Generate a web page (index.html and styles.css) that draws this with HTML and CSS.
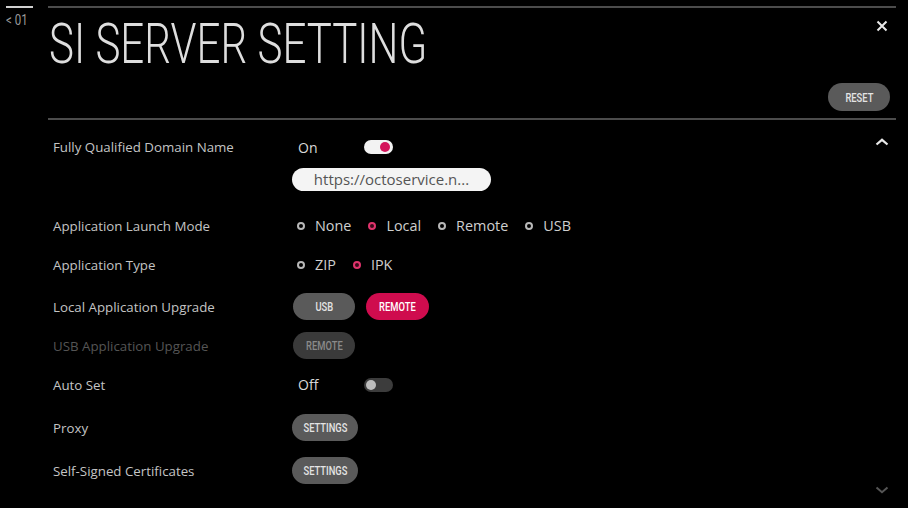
FILE: index.html
```html
<!DOCTYPE html>
<html lang="en">
<head>
  <meta charset="UTF-8">
  <title>SI Server Setting</title>
  <link rel="stylesheet" href="styles.css">
</head>
<body>
  <div class="screen">
    <div class="sidebar">
      <div class="back-line"></div>
      <div class="back"><span>&lt; 01</span></div>
    </div>

    <div class="panel">
      <div class="header">
        <h1 class="title"><span>SI SERVER SETTING</span></h1>
        <div class="header-side">
          <svg class="close" width="12" height="12" viewBox="0 0 12 12">
            <path d="M1.5 1.5 L10.5 10.5 M10.5 1.5 L1.5 10.5" stroke="#e8e8e8" stroke-width="2" fill="none"/>
          </svg>
          <button class="btn reset"><span>RESET</span></button>
        </div>
      </div>

      <div class="content">
        <div class="list">
          <div class="row fqdn">
            <div class="label">Fully Qualified Domain Name</div>
            <div class="value stack">
              <div class="line">
                <span class="state">On</span>
                <span class="toggle on"><span class="knob"></span></span>
              </div>
              <div class="url">https://octoservice.n...</div>
            </div>
          </div>

          <div class="row">
            <div class="label">Application Launch Mode</div>
            <div class="value radios">
              <span class="radio"><i></i>None</span>
              <span class="radio checked"><i></i>Local</span>
              <span class="radio"><i></i>Remote</span>
              <span class="radio"><i></i>USB</span>
            </div>
          </div>

          <div class="row">
            <div class="label">Application Type</div>
            <div class="value radios">
              <span class="radio"><i></i>ZIP</span>
              <span class="radio checked"><i></i>IPK</span>
            </div>
          </div>

          <div class="row pushed">
            <div class="label">Local Application Upgrade</div>
            <div class="value buttons">
              <button class="btn"><span>USB</span></button>
              <button class="btn active"><span>REMOTE</span></button>
            </div>
          </div>

          <div class="row disabled">
            <div class="label">USB Application Upgrade</div>
            <div class="value buttons">
              <button class="btn dim"><span>REMOTE</span></button>
            </div>
          </div>

          <div class="row">
            <div class="label">Auto Set</div>
            <div class="value">
              <div class="line">
                <span class="state">Off</span>
                <span class="toggle"><span class="knob"></span></span>
              </div>
            </div>
          </div>

          <div class="row spaced">
            <div class="label">Proxy</div>
            <div class="value buttons">
              <button class="btn wide"><span>SETTINGS</span></button>
            </div>
          </div>

          <div class="row spaced">
            <div class="label">Self-Signed Certificates</div>
            <div class="value buttons">
              <button class="btn wide"><span>SETTINGS</span></button>
            </div>
          </div>
        </div>

        <div class="scroll">
          <svg width="14" height="8" viewBox="0 0 14 8">
            <path d="M1.5 6.5 L7 1.8 L12.5 6.5" stroke="#e8e8e8" stroke-width="2.2" fill="none"/>
          </svg>
          <svg width="14" height="8" viewBox="0 0 14 8">
            <path d="M1.5 1.5 L7 6.2 L12.5 1.5" stroke="#555" stroke-width="2" fill="none"/>
          </svg>
        </div>
      </div>
    </div>
  </div>
</body>
</html>
```

FILE: styles.css
```css
body {
  margin: 0;
  background: #000;
  color: #c8c8c8;
  font-family: "Open Sans", sans-serif;
}

.screen {
  display: flex;
  width: 908px;
  height: 508px;
  overflow: hidden;
}

/* left rail with page number */
.sidebar {
  width: 42px;
  padding: 6px 0 0 6px;
}

.back-line {
  width: 27px;
  height: 2px;
  background: #d0d0d0;
}

.back {
  margin-top: 4px;
  font-family: Roboto, sans-serif;
  font-size: 14px;
  color: #9a9a9a;
  line-height: 16px;
  white-space: nowrap;
}

.back span {
  display: inline-block;
  transform: scaleX(0.82);
  transform-origin: left center;
}

.panel {
  width: 848px;
  padding-top: 6px;
  display: flex;
  flex-direction: column;
}

.header {
  height: 110px;
  border-top: 2px solid #4c4c4c;
  border-bottom: 2px solid #4c4c4c;
  display: flex;
  justify-content: space-between;
}

.title {
  margin: 9px 0 0 1px;
  font-family: Roboto, sans-serif;
  font-weight: 300;
  font-size: 55px;
  line-height: 55px;
  color: #dedede;
  white-space: nowrap;
}

.title span {
  display: inline-block;
  transform: scaleX(0.765);
  transform-origin: left center;
}

.header-side {
  display: flex;
  flex-direction: column;
  justify-content: space-between;
  align-items: flex-end;
  padding: 12px 6px 7px 0;
}

.close {
  margin-right: 2px;
}

/* pill buttons with condensed caps */
.btn {
  height: 27px;
  width: 62px;
  border: none;
  border-radius: 14px;
  background: #5a5a5a;
  color: #e4e4e4;
  font-family: Roboto, sans-serif;
  font-weight: 500;
  font-size: 13px;
  padding: 0;
  white-space: nowrap;
}

.btn span {
  display: inline-block;
  transform: scaleX(0.72);
}

.reset {
  width: 62px;
  height: 28px;
}

.btn.active {
  background: #cf0c4e;
  color: #fff;
  width: 63px;
}

.btn.dim {
  background: #3a3a3a;
  color: #8a8a8a;
}

.btn.wide {
  width: 66px;
  margin-left: -1px;
}

.content {
  flex: 1;
  display: flex;
  justify-content: space-between;
}

.list {
  padding: 15px 0 0 5px;
  display: flex;
  flex-direction: column;
  gap: 12px;
}

.row {
  display: flex;
  align-items: center;
  height: 27px;
}

.row.fqdn {
  height: auto;
  align-items: flex-start;
  margin-bottom: 9px;
}

.row.pushed {
  margin-top: 3px;
}

.row.spaced {
  margin-top: 4px;
}

.label {
  width: 240px;
  font-size: 13.3px;
  color: #c4c4c4;
}

.fqdn .label {
  line-height: 24px;
}

.row.disabled .label {
  color: #555;
}

.value {
  display: flex;
  align-items: center;
}

.stack {
  flex-direction: column;
  align-items: flex-start;
  gap: 9px;
}

.line {
  display: flex;
  align-items: center;
  height: 24px;
}

.state {
  width: 66px;
  padding-left: 5px;
  font-size: 14px;
  color: #d8d8d8;
}

.toggle {
  width: 29px;
  height: 14px;
  border-radius: 7px;
  background: #3c3c3c;
  position: relative;
}

.toggle .knob {
  position: absolute;
  top: 2px;
  left: 2px;
  width: 10px;
  height: 10px;
  border-radius: 50%;
  background: #bdbdbd;
}

.toggle.on {
  background: #f2f2f2;
}

.toggle.on .knob {
  left: auto;
  right: 3px;
  background: #d4145a;
}

.url {
  width: 199px;
  height: 23px;
  border-radius: 12px;
  background: #f4f4f4;
  color: #555;
  font-size: 15px;
  line-height: 23px;
  text-align: center;
  margin-left: -1px;
}

.radios {
  gap: 17px;
  padding-left: 4px;
}

.radio {
  display: flex;
  align-items: center;
  font-size: 14.4px;
  color: #cfcfcf;
}

.radio i {
  width: 4px;
  height: 4px;
  border: 2px solid #b8b8b8;
  border-radius: 50%;
  margin-right: 10px;
}

.radio.checked i {
  border-color: #e0336c;
  background: #3a0a1a;
}

.buttons {
  gap: 11px;
}

.scroll {
  display: flex;
  flex-direction: column;
  justify-content: space-between;
  align-items: center;
  width: 28px;
  padding: 18px 0 14px;
}
```
